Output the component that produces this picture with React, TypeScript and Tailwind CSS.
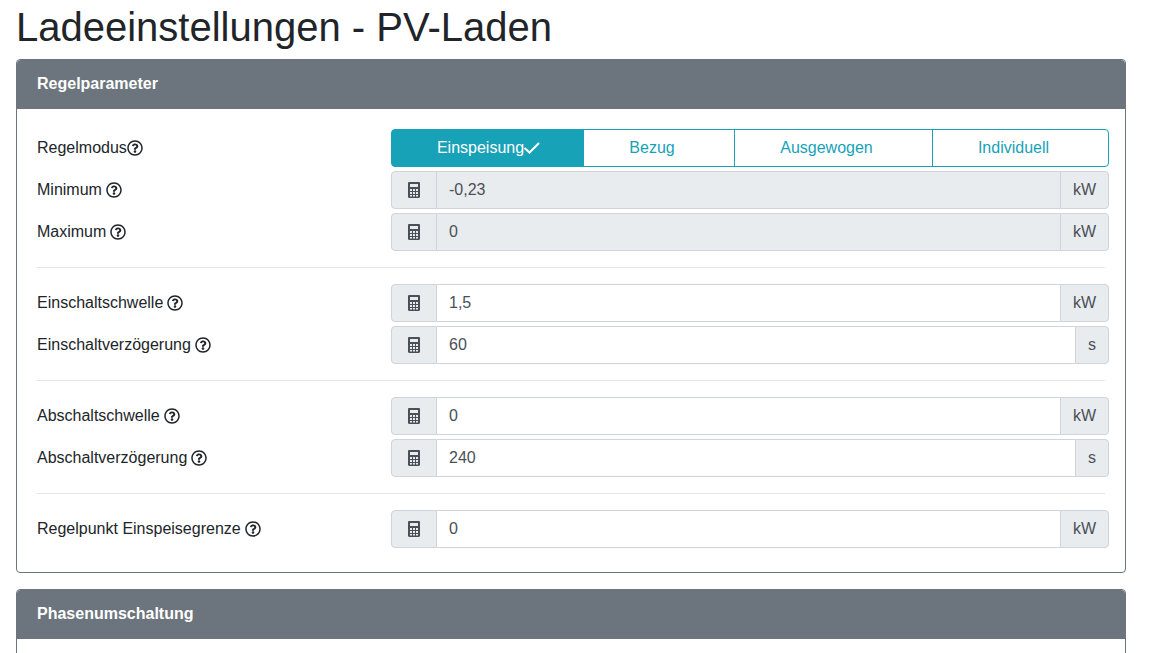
import React from "react";
import { FaRegQuestionCircle } from "react-icons/fa";

const modes = [
  { label: "Einspeisung", width: "w-[193px]", active: true },
  { label: "Bezug", width: "w-[152px]", active: false },
  { label: "Ausgewogen", width: "w-[199px]", active: false },
  { label: "Individuell", width: "flex-1", active: false },
];

// narrow solid calculator, the icon package's one is too wide
const CalcIcon = () => (
  <svg viewBox="0 0 12 16" className="w-3 h-4" fill="currentColor">
    <path
      fillRule="evenodd"
      d="M1.2 0h9.6C11.5 0 12 .5 12 1.2v13.6c0 .7-.5 1.2-1.2 1.2H1.2C.5 16 0 15.500 0 14.800V1.200C0 .5.500 0 1.200 0zM2 2v3h8V2zM2 7v2h2V7zM5 7v2h2V7zM8 7v2h2V7zM2 10v2h2v-2zM5 10v2h2v-2zM8 10v2h2v-2zM2 13v1.500h2V13zM5 13v1.500h2V13zM8 13v1.500h2V13z"
    />
  </svg>
);

const CheckIcon = () => (
  <svg viewBox="0 0 16 12" className="w-4 h-3" fill="none" stroke="currentColor" strokeWidth="2">
    <polyline points="0.5,6 5.500,10.500 15,1" />
  </svg>
);

const Label = ({ text, tight }: { text: string; tight?: boolean }) => (
  <div className="w-[354px] shrink-0 flex items-center text-[#212529]">
    <span>{text}</span>
    <FaRegQuestionCircle className={`${tight ? "ml-0" : "ml-1"} w-4 h-4 text-[#212529]`} />
  </div>
);

const NumberRow = ({
  label,
  value,
  unit,
  disabled,
}: {
  label: string;
  value: string;
  unit: string;
  disabled?: boolean;
}) => (
  <div className="flex h-[38px]">
    <Label text={label} />
    <div className="flex-1 flex text-[#495057]">
      <div className="w-[46px] flex items-center justify-center bg-[#e9ecef] border border-[#ced4da] rounded-l">
        <CalcIcon />
      </div>
      <div
        className={`flex-1 flex items-center px-3 border-y border-[#ced4da] ${disabled ? "bg-[#e9ecef]" : "bg-white"}`}
      >
        {value}
      </div>
      <div className="flex items-center px-3 bg-[#e9ecef] border border-[#ced4da] rounded-r">{unit}</div>
    </div>
  </div>
);

const Divider = () => <hr className="border-t border-[#e3e5e7] mr-1 my-4" />;

const CardHeader = ({ title }: { title: string }) => (
  <div className="h-[49px] flex items-center px-5 pb-px bg-[#6c757d] text-white font-bold rounded-t">{title}</div>
);

export default function App() {
  return (
    <div className="h-[653px] overflow-hidden bg-white text-base font-['Liberation_Sans',Arial,sans-serif]">
      <div className="w-[1110px] ml-4 pt-[3px]">
        <h1 className="text-[40px] leading-[48px] font-normal text-[#212529] mb-2">Ladeeinstellungen - PV-Laden</h1>

        <div className="border border-[#6c757d] rounded mb-4">
          <CardHeader title="Regelparameter" />
          <div className="pl-5 pr-4 pt-5 pb-6">
            <div className="flex flex-col gap-1">
              <div className="flex h-[38px]">
                <Label text="Regelmodus" tight />
                <div className="flex-1 flex">
                  {modes.map((mode, i) => (
                    <button
                      key={mode.label}
                      className={`${mode.width} flex items-center justify-center border border-[#17a2b8] ${
                        i > 0 ? "-ml-px" : ""
                      } ${i === 0 ? "rounded-l" : ""} ${i === modes.length - 1 ? "rounded-r" : ""} ${
                        mode.active ? "bg-[#17a2b8] text-white pl-0.5" : "bg-white text-[#17a2b8]"
                      }`}
                    >
                      {mode.label}
                      {mode.active ? <CheckIcon /> : <span className="w-3.5" />}
                    </button>
                  ))}
                </div>
              </div>
              <NumberRow label="Minimum" value="-0,23" unit="kW" disabled />
              <NumberRow label="Maximum" value="0" unit="kW" disabled />
            </div>
            <Divider />
            <div className="flex flex-col gap-1">
              <NumberRow label="Einschaltschwelle" value="1,5" unit="kW" />
              <NumberRow label="Einschaltverzögerung" value="60" unit="s" />
            </div>
            <Divider />
            <div className="flex flex-col gap-1">
              <NumberRow label="Abschaltschwelle" value="0" unit="kW" />
              <NumberRow label="Abschaltverzögerung" value="240" unit="s" />
            </div>
            <Divider />
            <NumberRow label="Regelpunkt Einspeisegrenze" value="0" unit="kW" />
          </div>
        </div>

        <div className="border border-[#6c757d] rounded h-[200px]">
          <CardHeader title="Phasenumschaltung" />
        </div>
      </div>
    </div>
  );
}
